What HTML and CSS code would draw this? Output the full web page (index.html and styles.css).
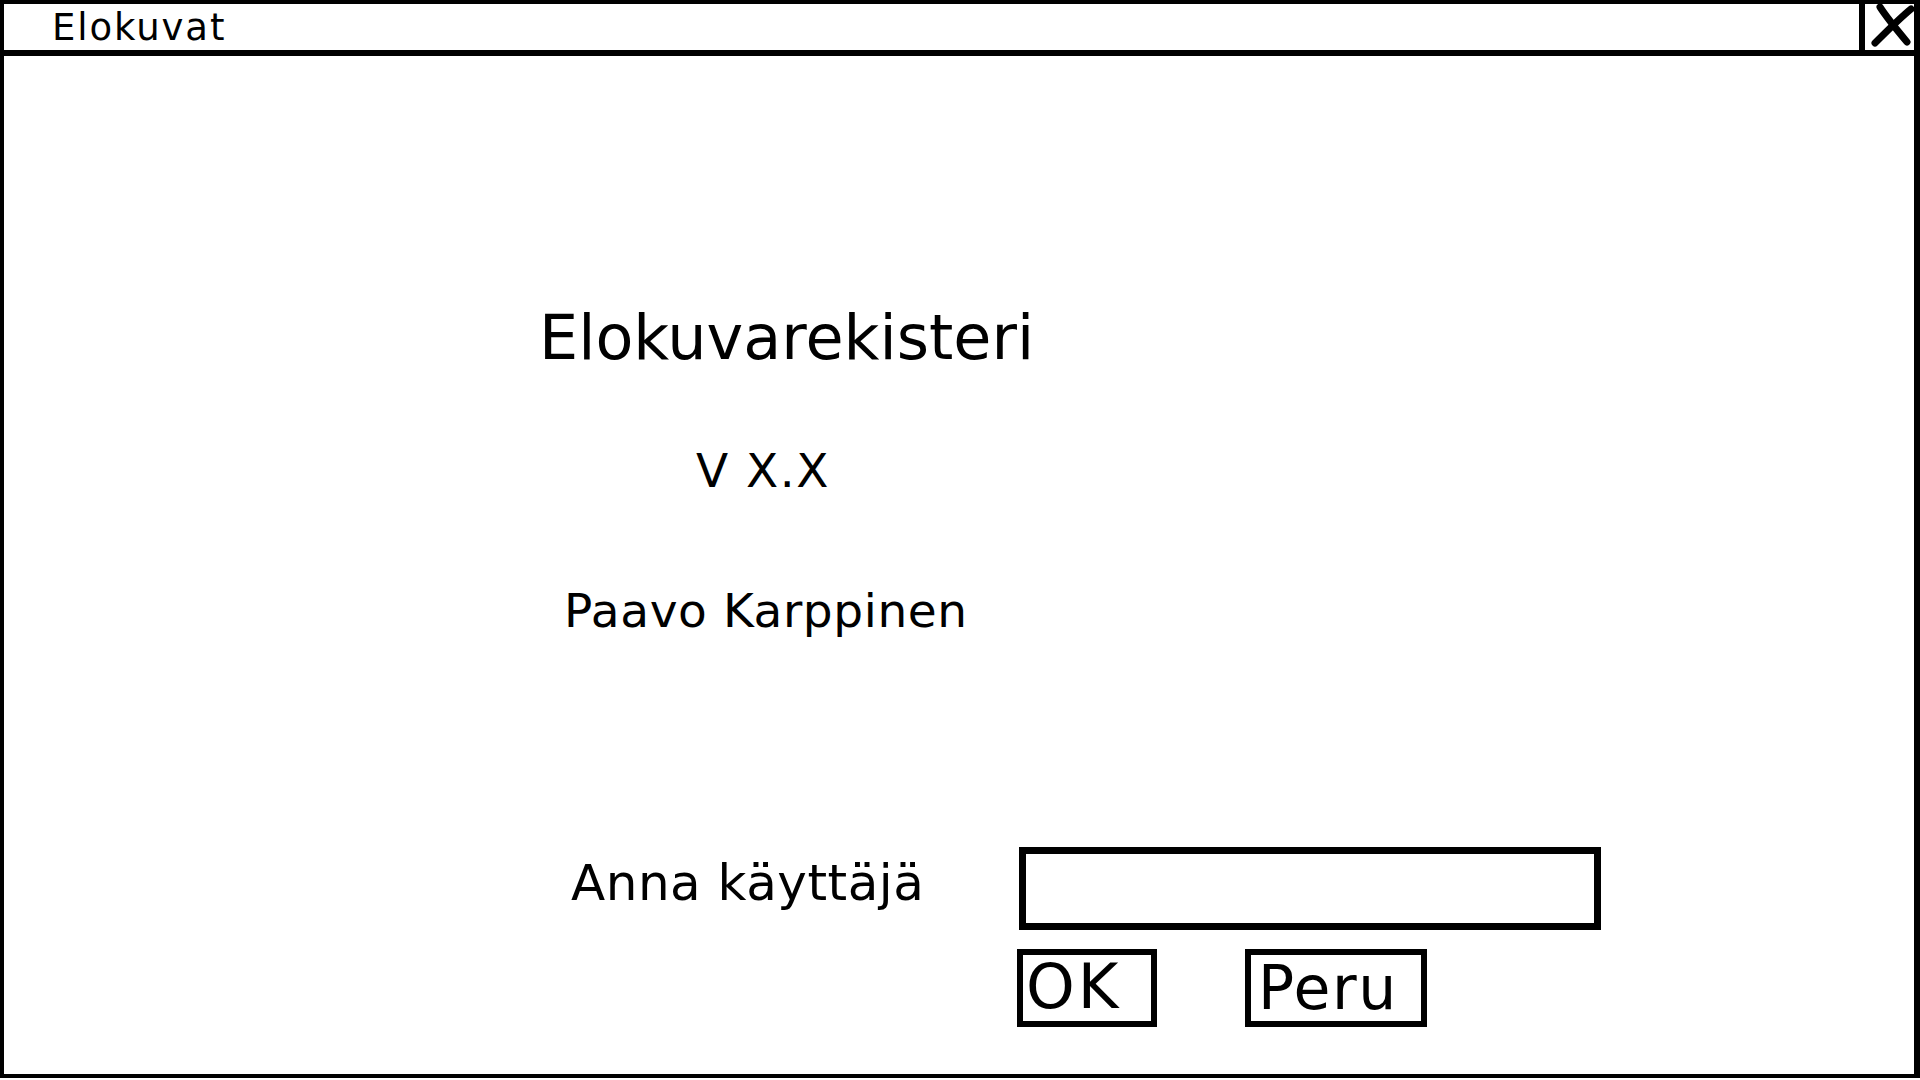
FILE: index.html
```html
<!DOCTYPE html>
<html lang="fi">
<head>
  <meta charset="UTF-8">
  <meta name="viewport" content="width=device-width, initial-scale=1.0">
  <title>Elokuvat</title>
  <link rel="stylesheet" href="styles.css">
</head>
<body>
  <div class="window">
    <header class="titlebar">
      <span class="title">Elokuvat</span>
      <button class="close-btn" type="button" aria-label="Sulje">
        <svg width="49" height="46" viewBox="0 0 49 46">
          <path d="M15 3 C 22 14, 32 26, 42 38" fill="none" stroke="#000" stroke-width="7" stroke-linecap="round"/>
          <path d="M46 5 C 35 14, 22 27, 10 39" fill="none" stroke="#000" stroke-width="7" stroke-linecap="round"/>
        </svg>
      </button>
    </header>

    <main class="content">
      <h1 class="app-name">Elokuvarekisteri</h1>
      <div class="version">V X.X</div>
      <div class="author">Paavo Karppinen</div>

      <form class="login">
        <div class="field-row">
          <label class="field-label" for="user">Anna käyttäjä</label>
          <input class="field-input" id="user" type="text">
        </div>
        <div class="button-row">
          <button type="submit" class="btn btn-ok">OK</button>
          <button type="button" class="btn btn-cancel">Peru</button>
        </div>
      </form>
    </main>
  </div>
</body>
</html>
```

FILE: styles.css
```css
* {
  margin: 0;
  padding: 0;
  box-sizing: border-box;
}

body {
  font-family: "DejaVu Sans", Verdana, sans-serif;
  background: #fff;
  color: #000;
}

.window {
  width: 1920px;
  height: 1078px;
  border: 4px solid #000;
  border-right-width: 6px;
  display: flex;
  flex-direction: column;
}

/* title bar */
.titlebar {
  display: flex;
  height: 52px;
  border-bottom: 6px solid #000;
}

.title {
  flex: 1;
  align-self: center;
  padding-left: 48px;
  font-size: 37px;
  letter-spacing: 1.9px;
  line-height: 1;
}

.close-btn {
  width: 55px;
  border: none;
  border-left: 6px solid #000;
  background: #fff;
  display: flex;
  align-items: flex-start;
}

/* splash text */
.content {
  flex: 1;
}

.app-name {
  margin: 251px 0 0 535px;
  font-size: 62px;
  font-weight: normal;
  line-height: 1;
}

.version {
  margin: 78px 0 0 692px;
  font-size: 47px;
  letter-spacing: 1.5px;
  line-height: 1;
}

.author {
  margin: 93px 0 0 560px;
  font-size: 47px;
  letter-spacing: 0.6px;
  line-height: 1;
}

/* login form */
.login {
  margin-top: 213px;
}

.field-row {
  display: flex;
  align-items: flex-start;
}

.field-label {
  width: 448px;
  margin: 11px 0 0 567px;
  font-size: 50px;
  letter-spacing: 0.5px;
  line-height: 1;
}

.field-input {
  width: 582px;
  height: 83px;
  border: 7px solid #000;
  outline: none;
  background: #fff;
  font-family: inherit;
  font-size: 40px;
  padding: 0 10px;
}

.button-row {
  display: flex;
  gap: 88px;
  margin: 19px 0 0 1013px;
}

.btn {
  height: 78px;
  border: 6px solid #000;
  background: #fff;
  color: #000;
  font-family: inherit;
  line-height: 1;
  text-align: left;
  display: flex;
  align-items: flex-start;
  cursor: pointer;
}

.btn-ok {
  width: 140px;
  padding: 1px 0 0 3px;
  font-size: 62px;
  letter-spacing: 3px;
}

.btn-cancel {
  width: 182px;
  padding: 3px 0 0 7px;
  font-size: 60px;
  letter-spacing: 1.5px;
}
```
